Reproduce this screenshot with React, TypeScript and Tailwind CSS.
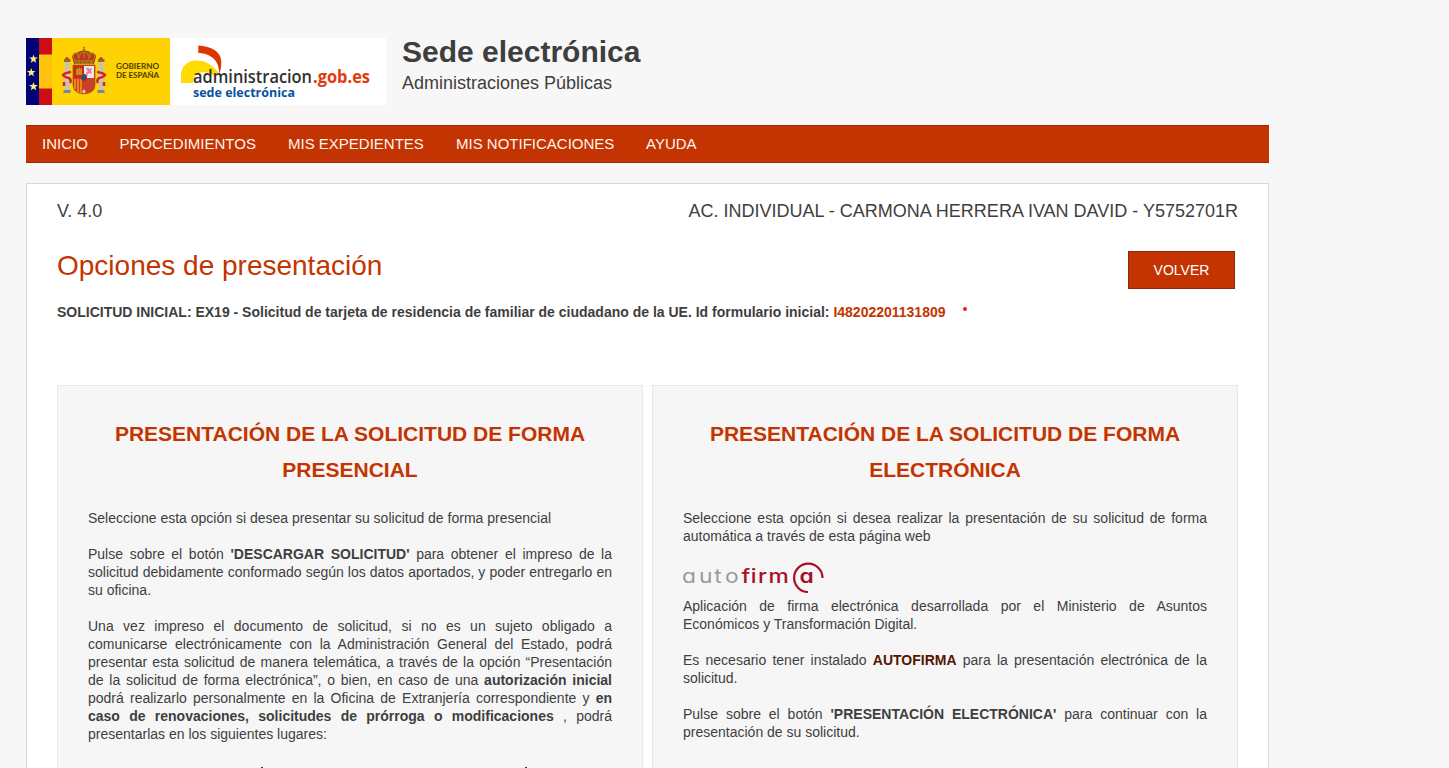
import type { ReactNode } from 'react';

const navItems = [
  { label: 'INICIO', cls: 'w-[77.5px]' },
  { label: 'PROCEDIMIENTOS', cls: 'w-[168.5px]' },
  { label: 'MIS EXPEDIENTES', cls: 'w-[168px]' },
  { label: 'MIS NOTIFICACIONES', cls: 'w-[190px]' },
  { label: 'AYUDA', cls: 'w-[90px]' },
];

const star = 'M0 -4.6 L1.1 -1.4 L4.4 -1.4 L1.8 0.6 L2.7 3.8 L0 1.9 L-2.7 3.8 L-1.8 0.6 L-4.4 -1.4 L-1.1 -1.4Z';

function CoatOfArms() {
  return (
    <g>
      <rect x="39" y="24" width="4.500" height="28" fill="#c3c3bb" />
      <rect x="73" y="24" width="4.500" height="28" fill="#c3c3bb" />
      <rect x="38" y="21" width="6.500" height="3" fill="#9a6b1c" />
      <rect x="72" y="21" width="6.500" height="3" fill="#9a6b1c" />
      <path d="M39 21q2-4 4 0zM73 21q2-4 4 0z" fill="#b3341c" />
      <path d="M37.500 52h7v3h-7zM71.500 52h7v3h-7z" fill="#7c8793" />
      <path d="M45 34q-7 1-8 3q1 2 6 3q3 2 1 5M71 34q7 1 8 3q-1 2-6 3q-3 2-1 5M38 44v4M78 44v4" fill="none" stroke="#d3222f" strokeWidth="2.400" />
      <path d="M47 27h22v20q0 8-11 9q-11-1-11-9z" fill="#d23b24" stroke="#8b5518" strokeWidth=".7" />
      <path d="M48 28h10v12H48z" fill="#cf251f" />
      <path d="M58 28h10v12H58z" fill="#efe6ea" />
      <path d="M50 37v-6h1v-1h1v1h1v-2h1v2h1v-1h1v7z" fill="#c2901a" />
      <path d="M60 31l2-2 1 2 3-1-1 3 1 3-3-1-2 3-1-3 2-2z" fill="#e27ba6" />
      <path d="M49 41v10M52 41v13M55 41v14" stroke="#eeb112" strokeWidth="1.300" />
      <path d="M60 43h7M60 46h7M60 49h6M62 41v12M65 41v10" stroke="#a7552b" strokeWidth=".7" />
      <ellipse cx="58" cy="39.500" rx="2.700" ry="3.200" fill="#244f93" stroke="#a63520" />
      <path d="M56 54l2-3 2 3-2 1.500z" fill="#d9d1b4" />
      <path d="M48 26l-2-7q1-4 5-4q3-3 7-2q4-1 7 2q5 0 5 4l-2 7z" fill="#c52f26" />
      <path d="M48 22q-3-7 4-7q-1 3 1 6M68 22q3-7-4-7q1 3-1 6M58 20v-7M53 21q0-6 5-7q5 1 5 7" fill="none" stroke="#a57a10" strokeWidth="1.400" />
      <path d="M48 22h20l-1 4H49z" fill="#a57910" />
      <path d="M50 24h16" stroke="#c72d28" strokeWidth="1" strokeDasharray="2 2" />
      <circle cx="58" cy="12.500" r="1.500" fill="#927023" />
      <path d="M58 8.500v3M56.800 9.700h2.400" stroke="#8f692b" strokeWidth=".8" />
    </g>
  );
}

function Logo() {
  return (
    <svg width="360" height="67" viewBox="0 0 360 67" className="block shrink-0">
      <rect width="360" height="67" fill="#fff" />
      <rect width="144" height="67" fill="#ffd204" />
      <rect width="13" height="67" fill="#020278" />
      <rect x="13" width="13" height="67" fill="#ffc20e" />
      <rect x="13" width="13" height="16.500" fill="#cc0d14" />
      <rect x="13" y="50.500" width="13" height="16.500" fill="#cc0d14" />
      <g fill="#fff16b">
        <path d={star} transform="translate(7.500 21)" />
        <path d={star} transform="translate(5.200 34.500)" />
        <path d={star} transform="translate(7.500 48.500)" />
      </g>
      <CoatOfArms />
      <g fontFamily="Lato" fontSize="7.600" fontWeight="700" fill="#4a3d05">
        <text x="90" y="31" textLength="43" lengthAdjust="spacingAndGlyphs">GOBIERNO</text>
        <text x="90" y="39.700" textLength="43" lengthAdjust="spacingAndGlyphs">DE ESPAÑA</text>
      </g>
      <path d="M155 45v-8c0-8 6-14 14-14.500c9-.500 18 4 24 13l-6 2c-4-4-10-4-15-2c-3 2-5 4-5 9.500z" fill="#ffdb00" />
      <path d="M172.300 7.500c13 1 22.700 6 22.900 15.500c.3 6-.7 10-2.200 13c.5-5-1-11-5-15c-4-4-10-6-15.700-6z" fill="#df3500" />
      <g fontFamily="Open Sans" fontWeight="600">
        <text x="167" y="45" fontSize="17.600" fill="#303030" textLength="119" lengthAdjust="spacingAndGlyphs">administracion</text>
        <text x="287" y="45" fontSize="17.600" fontWeight="700" fill="#e23a0c" textLength="57" lengthAdjust="spacingAndGlyphs">.gob.es</text>
        <text x="167" y="58.500" fontSize="13.200" fontWeight="700" fill="#0752a0" textLength="102" lengthAdjust="spacingAndGlyphs">sede electrónica</text>
      </g>
    </svg>
  );
}

function AutofirmaLogo() {
  return (
    <svg width="142" height="34" viewBox="0 -1.500 142 34" className="block">
      <g fontFamily="Inter" fontSize="19" transform="scale(1.2 1)" style={{ fontFeatureSettings: '"cv11"' }}>
        <text y="21" x="-0.900 13.300 26 34.900" fontWeight="400" fill="#99999d">auto</text>
        <text y="21" x="48.700 56.500 62.500 71.200" fontWeight="500" fill="#a80f2a">firm</text>
        <text x="97" y="21" fontWeight="600" fill="#a80f2a">a</text>
      </g>
      <path d="M125 29.500A14.200 14.200 0 1 1 139.500 15.500" fill="none" stroke="#a80f2a" strokeWidth="2.200" />
    </svg>
  );
}

function Card({ title, children }: { title: ReactNode; children: ReactNode }) {
  return (
    <section className="h-[420px] w-[586px] border border-[#e8e8e8] bg-[#f6f6f6] px-[30px] pt-[30px]">
      <h2 className="text-center text-[21px] leading-[36px] font-bold text-[#c33400]">{title}</h2>
      <div className="mt-[21px] space-y-[18px] text-justify text-[14px] leading-[18px]">{children}</div>
    </section>
  );
}

export default function App() {
  return (
    <div className="h-[768px] overflow-hidden bg-[#f7f7f7] pl-[26px] pt-[38px] font-['Liberation_Sans',Arial,sans-serif] text-[#3e3e3e]">
      <header className="flex h-[67px] gap-4">
        <Logo />
        <div>
          <h1 className="-mt-[3px] text-[30px] leading-[34px] font-bold">Sede electrónica</h1>
          <p className="mt-[3px] text-[18px] leading-[22px]">Administraciones Públicas</p>
        </div>
      </header>

      <nav className="mt-5 flex h-[38px] w-[1243px] items-center border-y border-[#982b05] bg-[#c43302] pl-4 text-[15px] text-[#fff5ef]">
        {navItems.map((item) => (
          <a key={item.label} className={`${item.cls} whitespace-nowrap`}>{item.label}</a>
        ))}
      </nav>

      <main className="mt-5 h-[640px] w-[1243px] border border-[#d9d9d9] bg-white px-[30px] pt-4">
        <div className="flex h-[22px] justify-between text-[18px] leading-[22px]">
          <span>V. 4.0</span>
          <span>AC. INDIVIDUAL - CARMONA HERRERA IVAN DAVID - Y5752701R</span>
        </div>
        <div className="mt-[29px] flex h-[38px] justify-between pr-[3px]">
          <h2 className="-mt-[3px] text-[28px] leading-[36px] text-[#c33400]">Opciones de presentación</h2>
          <button className="h-[38px] w-[107px] border border-[#8d2806] bg-[#c43302] text-[14px] text-white">VOLVER</button>
        </div>
        <p className="mt-[14px] flex h-[18px] text-[14px] leading-[18px] font-bold">
          <span>
            SOLICITUD INICIAL: EX19 - Solicitud de tarjeta de residencia de familiar de ciudadano de la UE. Id formulario inicial:{' '}
            <span className="text-[#c33400]">I48202201131809</span>
          </span>
          <span className="mt-1 ml-[17px] size-1 rounded-full bg-[#ed1c24]" />
        </p>

        <div className="mt-[64px] flex gap-[9px]">
          <Card title={<>PRESENTACIÓN DE LA SOLICITUD DE FORMA<br />PRESENCIAL</>}>
            <p>Seleccione esta opción si desea presentar su solicitud de forma presencial</p>
            <p>Pulse sobre el botón <b>'DESCARGAR SOLICITUD'</b> para obtener el impreso de la solicitud debidamente conformado según los datos aportados, y poder entregarlo en su oficina.</p>
            <p>Una vez impreso el documento de solicitud, si no es un sujeto obligado a comunicarse electrónicamente con la Administración General del Estado, podrá presentar esta solicitud de manera telemática, a través de la opción “Presentación de la solicitud de forma electrónica”, o bien, en caso de una <b>autorización inicial</b> podrá realizarlo personalmente en la Oficina de Extranjería correspondiente y <b>en caso de renovaciones, solicitudes de prórroga o modificaciones</b> , podrá presentarlas en los siguientes lugares:</p>
            <div className="flex pt-[6px]">
              <span className="ml-[173px] h-1 w-[2px] bg-[#3e3e3e]" />
              <span className="ml-[262px] h-1 w-[2px] bg-[#3e3e3e]" />
            </div>
          </Card>
          <Card title={<>PRESENTACIÓN DE LA SOLICITUD DE FORMA<br />ELECTRÓNICA</>}>
            <p>Seleccione esta opción si desea realizar la presentación de su solicitud de forma automática a través de esta página web</p>
            <div className="-mt-[2px] mb-[2px] h-[34px]"><AutofirmaLogo /></div>
            <p>Aplicación de firma electrónica desarrollada por el Ministerio de Asuntos Económicos y Transformación Digital.</p>
            <p>Es necesario tener instalado <b className="text-[#541600]">AUTOFIRMA</b> para la presentación electrónica de la solicitud.</p>
            <p>Pulse sobre el botón <b>'PRESENTACIÓN ELECTRÓNICA'</b> para continuar con la presentación de su solicitud.</p>
          </Card>
        </div>
      </main>
    </div>
  );
}
